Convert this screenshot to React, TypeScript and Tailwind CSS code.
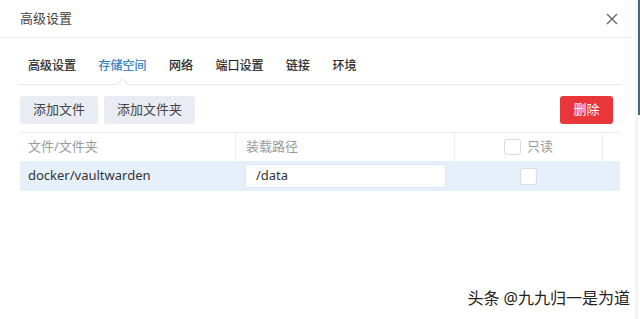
import React from 'react';

const tabs = ['高级设置', '存储空间', '网络', '端口设置', '链接', '环境'];

const App = () => {
  return (
    <div
      className="relative w-[640px] h-[319px] overflow-hidden bg-white text-[#333]"
      style={{ fontFamily: '"Noto Sans", "Noto Sans CJK SC", sans-serif' }}
    >
      {/* header */}
      <div className="h-[38px] flex items-center justify-between pl-[20px] pr-[22px] border-b border-[#eef0f3]">
        <span className="text-[13px] text-[#444]">高级设置</span>
        <svg width="12" height="12" viewBox="0 0 12 12" className="text-[#666]">
          <path d="M1 1L11 11M11 1L1 11" stroke="currentColor" strokeWidth="1.4" />
        </svg>
      </div>

      <div className="px-[20px]">
        {/* tabs */}
        <div className="relative h-[47px] flex items-center gap-[22.5px] pl-[8px] pt-[10px] border-b border-[#e3e6ea]">
          {tabs.map((t, i) => (
            <span
              key={t}
              className={`text-[12px] ${i === 1 ? 'text-[#1f7bc1]' : 'text-[#222]'}`}
              style={{ WebkitTextStroke: '0.2px currentColor' }}
            >
              {t}
            </span>
          ))}
          <div className="absolute left-[98px] bottom-[-5px] w-[9px] h-[9px] rotate-45 bg-white border-l border-t border-[#e3e6ea]" />
        </div>

        {/* actions */}
        <div className="flex items-center justify-between pt-[11px] pb-[8px] pr-[7px]">
          <div className="flex gap-[6px]">
            <button className="h-[28px] px-[13px] rounded-[3px] bg-[#e9edf3] text-[13px] text-[#444]">添加文件</button>
            <button className="h-[28px] px-[13px] rounded-[3px] bg-[#e9edf3] text-[13px] text-[#444]">添加文件夹</button>
          </div>
          <button className="h-[28px] w-[53px] rounded-[3px] bg-[#e9363a] text-[13px] text-white">删除</button>
        </div>

        {/* table */}
        <div className="border-t border-[#e6e9ed]">
          <div className="grid grid-cols-[216px_219px_148px_17px] h-[28px] text-[13px] text-[#9a9a9a]">
            <div className="flex items-center pl-[8px] border-r border-[#eceef1]">文件/文件夹</div>
            <div className="flex items-center pl-[10px] border-r border-[#eceef1]">装载路径</div>
            <div className="flex items-center justify-center gap-[6px] border-r border-[#eceef1]">
              <span className="w-[17px] h-[16px] rounded-[3px] border border-[#d8dce2] bg-white" />
              <span>只读</span>
            </div>
            <div />
          </div>
          <div className="grid grid-cols-[216px_219px_165px] h-[30px] bg-[#e6f0fb] text-[13px] text-[#333]">
            <div className="flex items-center pl-[8px]">docker/vaultwarden</div>
            <div className="flex items-center pl-[9px]">
              <div className="w-[201px] h-[24px] flex items-center pl-[10px] bg-white rounded-[3px] border border-[#e2e6ec]">
                /data
              </div>
            </div>
            <div className="flex items-center pl-[65px]">
              <span className="w-[17px] h-[17px] rounded-[3px] border border-[#d8dce2] bg-white" />
            </div>
          </div>
        </div>
      </div>

      {/* right edge strip */}
      <div className="absolute right-0 top-0 w-[2px] h-[115px] bg-[#3c6b78]" />
      <div className="absolute right-[2px] top-0 w-[3px] h-full bg-[#f4f5f6]" />

      {/* watermark */}
      <div
        className="absolute right-[10px] bottom-[9px] text-[16px] text-[#222]"
        style={{ textShadow: '0 0 2px #fff, 0 0 2px #fff' }}
      >
        头条 @九九归一是为道
      </div>
    </div>
  );
};

export default App;
